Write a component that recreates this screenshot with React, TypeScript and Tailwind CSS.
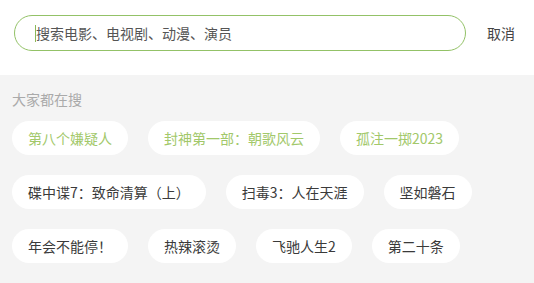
import React from "react";

const rows: { t: string; g?: boolean }[][] = [
  [{ t: "第八个嫌疑人", g: true }, { t: "封神第一部：朝歌风云", g: true }, { t: "孤注一掷2023", g: true }],
  [{ t: "碟中谍7：致命清算（上）" }, { t: "扫毒3：人在天涯" }, { t: "坚如磐石" }],
  [{ t: "年会不能停！" }, { t: "热辣滚烫" }, { t: "飞驰人生2" }, { t: "第二十条" }],
];

export default function App() {
  return (
    <div
      className="w-[534px] h-[283px] bg-[#f4f4f4] overflow-hidden"
      style={{ fontFamily: '"Noto Sans CJK SC", "Noto Sans", sans-serif' }}
    >
      <div className="h-[75px] bg-white flex items-start pl-[14px] pt-[15px]">
        <div className="w-[452px] h-[36px] rounded-full border border-[#93c267] flex items-center pl-[20px]">
          <span className="w-px h-[17px] bg-[#8ab85a]" />
          <span className="text-[14px] text-[#555] leading-none">搜索电影、电视剧、动漫、演员</span>
        </div>
        <span className="ml-[21px] h-[36px] flex items-center text-[14px] text-[#444]">取消</span>
      </div>
      <div className="px-[12px] pt-[14px]">
        <div className="text-[14px] text-[#aaa] leading-[20px]">大家都在搜</div>
        <div className="mt-[12px] flex flex-col gap-[20px]">
          {rows.map((r, i) => (
            <div key={i} className="flex gap-[20px]">
              {r.map((c) => (
                <div
                  key={c.t}
                  className={
                    "h-[34px] px-[16px] rounded-full bg-white flex items-center text-[14px] " +
                    (c.g ? "text-[#a2c86a]" : "text-[#3a3a3a]")
                  }
                >
                  {c.t}
                </div>
              ))}
            </div>
          ))}
        </div>
      </div>
    </div>
  );
}
